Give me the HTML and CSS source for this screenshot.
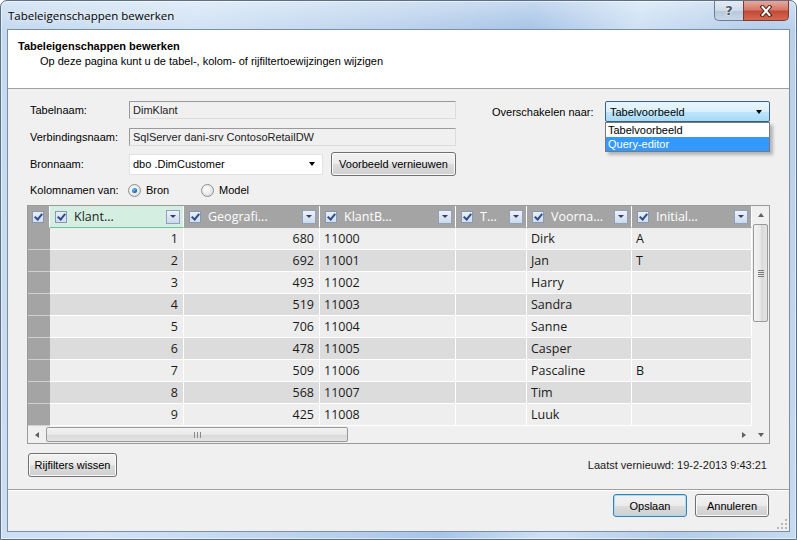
FILE: index.html
```html
<!DOCTYPE html>
<html>
<head>
    <title>Tabeleigenschappen bewerken</title>
    <link rel="stylesheet" href="styles.css">
</head>
<body>

<div class="window">
    <!-- Titelbalk -->
    <div class="titlebar">
        <span class="title">Tabeleigenschappen bewerken</span>
        <div class="caption-buttons">
            <div class="cap-btn cap-help">?</div>
            <div class="cap-btn cap-close">
                <svg width="14" height="12" viewBox="0 0 14 12">
                    <path d="M3.5 2 L10.5 10 M10.5 2 L3.5 10" stroke="#4a1d16" stroke-width="4" stroke-linecap="square"/>
                    <path d="M3.5 2 L10.5 10 M10.5 2 L3.5 10" stroke="#ffffff" stroke-width="2" stroke-linecap="square"/>
                </svg>
            </div>
        </div>
    </div>

    <div class="client">
        <div class="banner">
            <div class="banner-title">Tabeleigenschappen bewerken</div>
            <div class="banner-sub">Op deze pagina kunt u de tabel-, kolom- of rijfiltertoewijzingen wijzigen</div>
        </div>

        <div class="content">
            <div class="form-top">
                <div class="form-left">
                    <div class="form-row row-text first">
                        <span class="label">Tabelnaam:</span>
                        <div class="textbox readonly">DimKlant</div>
                    </div>
                    <div class="form-row row-text second">
                        <span class="label">Verbindingsnaam:</span>
                        <div class="textbox readonly">SqlServer dani-srv ContosoRetailDW</div>
                    </div>
                    <div class="form-row row-source">
                        <span class="label">Bronnaam:</span>
                        <div class="combo combo-source">
                            <span class="combo-text">dbo .DimCustomer</span>
                            <span class="arrow"></span>
                        </div>
                        <div class="btn btn-refresh">Voorbeeld vernieuwen</div>
                    </div>
                    <div class="form-row row-radio">
                        <span class="label">Kolomnamen van:</span>
                        <div class="radio-option option-bron">
                            <span class="radio checked"><span class="dot"></span></span>
                            <span>Bron</span>
                        </div>
                        <div class="radio-option">
                            <span class="radio"></span>
                            <span>Model</span>
                        </div>
                    </div>
                </div>

                <div class="form-right">
                    <span class="label label-switch">Overschakelen naar:</span>
                    <div class="switch-combo">
                        <div class="combo combo-open">
                            <span class="combo-text">Tabelvoorbeeld</span>
                            <span class="arrow"></span>
                        </div>
                        <ul class="dropdown-list">
                            <li>Tabelvoorbeeld</li>
                            <li class="selected">Query-editor</li>
                        </ul>
                    </div>
                </div>
            </div>

            <!-- Voorbeeldraster -->
            <div class="grid">
                <div class="grid-main">
                    <div class="grid-row grid-header">
                        <div class="hdr hdr-corner"><span class="chk"><span class="tick"></span></span></div>
                        <div class="hdr hdr-active">
                            <span class="chk"><span class="tick"></span></span>
                            <span class="hdr-text">Klant...</span>
                            <span class="hdr-drop"><span class="tri"></span></span>
                        </div>
                        <div class="hdr">
                            <span class="chk"><span class="tick"></span></span>
                            <span class="hdr-text">Geografi...</span>
                            <span class="hdr-drop"><span class="tri"></span></span>
                        </div>
                        <div class="hdr">
                            <span class="chk"><span class="tick"></span></span>
                            <span class="hdr-text">KlantB...</span>
                            <span class="hdr-drop"><span class="tri"></span></span>
                        </div>
                        <div class="hdr">
                            <span class="chk"><span class="tick"></span></span>
                            <span class="hdr-text">T...</span>
                            <span class="hdr-drop"><span class="tri"></span></span>
                        </div>
                        <div class="hdr">
                            <span class="chk"><span class="tick"></span></span>
                            <span class="hdr-text">Voorna...</span>
                            <span class="hdr-drop"><span class="tri"></span></span>
                        </div>
                        <div class="hdr">
                            <span class="chk"><span class="tick"></span></span>
                            <span class="hdr-text">Initial...</span>
                            <span class="hdr-drop"><span class="tri"></span></span>
                        </div>
                    </div>

                    <div class="grid-body">
                        <div class="grid-row">
                            <div class="rowhdr"></div><div class="cell num">1</div><div class="cell num">680</div><div class="cell">11000</div><div class="cell"></div><div class="cell">Dirk</div><div class="cell">A</div>
                        </div>
                        <div class="grid-row">
                            <div class="rowhdr"></div><div class="cell num">2</div><div class="cell num">692</div><div class="cell">11001</div><div class="cell"></div><div class="cell">Jan</div><div class="cell">T</div>
                        </div>
                        <div class="grid-row">
                            <div class="rowhdr"></div><div class="cell num">3</div><div class="cell num">493</div><div class="cell">11002</div><div class="cell"></div><div class="cell">Harry</div><div class="cell"></div>
                        </div>
                        <div class="grid-row">
                            <div class="rowhdr"></div><div class="cell num">4</div><div class="cell num">519</div><div class="cell">11003</div><div class="cell"></div><div class="cell">Sandra</div><div class="cell"></div>
                        </div>
                        <div class="grid-row">
                            <div class="rowhdr"></div><div class="cell num">5</div><div class="cell num">706</div><div class="cell">11004</div><div class="cell"></div><div class="cell">Sanne</div><div class="cell"></div>
                        </div>
                        <div class="grid-row">
                            <div class="rowhdr"></div><div class="cell num">6</div><div class="cell num">478</div><div class="cell">11005</div><div class="cell"></div><div class="cell">Casper</div><div class="cell"></div>
                        </div>
                        <div class="grid-row">
                            <div class="rowhdr"></div><div class="cell num">7</div><div class="cell num">509</div><div class="cell">11006</div><div class="cell"></div><div class="cell">Pascaline</div><div class="cell">B</div>
                        </div>
                        <div class="grid-row">
                            <div class="rowhdr"></div><div class="cell num">8</div><div class="cell num">568</div><div class="cell">11007</div><div class="cell"></div><div class="cell">Tim</div><div class="cell"></div>
                        </div>
                        <div class="grid-row">
                            <div class="rowhdr"></div><div class="cell num">9</div><div class="cell num">425</div><div class="cell">11008</div><div class="cell"></div><div class="cell">Luuk</div><div class="cell"></div>
                        </div>
                    </div>

                    <div class="hscroll">
                        <div class="sb-arrow"><span class="tri-left"></span></div>
                        <div class="hthumb"><span class="grip-v"></span><span class="grip-v"></span><span class="grip-v"></span></div>
                        <div class="sb-space"></div>
                        <div class="sb-arrow"><span class="tri-right"></span></div>
                    </div>
                </div>

                <div class="vscroll">
                    <div class="sb-arrow"><span class="tri-up"></span></div>
                    <div class="vthumb"><span class="grip-h"></span><span class="grip-h"></span><span class="grip-h"></span><span class="grip-h"></span></div>
                    <div class="sb-space"></div>
                    <div class="sb-arrow"><span class="tri-down"></span></div>
                </div>
            </div>

            <div class="under-grid">
                <div class="btn btn-clear">Rijfilters wissen</div>
                <span class="refreshed">Laatst vernieuwd: 19-2-2013 9:43:21</span>
            </div>
        </div>

        <div class="footer">
            <div class="btn btn-footer btn-default">Opslaan</div>
            <div class="btn btn-footer">Annuleren</div>
            <svg class="size-grip" width="10" height="10" viewBox="0 0 10 10">
                <rect x="8" y="0" width="2" height="2" fill="#b8b8b8"/>
                <rect x="4" y="4" width="2" height="2" fill="#b8b8b8"/>
                <rect x="8" y="4" width="2" height="2" fill="#b8b8b8"/>
                <rect x="0" y="8" width="2" height="2" fill="#b8b8b8"/>
                <rect x="4" y="8" width="2" height="2" fill="#b8b8b8"/>
                <rect x="8" y="8" width="2" height="2" fill="#b8b8b8"/>
            </svg>
        </div>
    </div>
</div>

</body>
</html>
```

FILE: styles.css
```css
body {
    margin: 0;
    padding: 0;
    font-family: "Liberation Sans", Arial, sans-serif;
    font-size: 11px;
    color: #000;
    background-color: #fff;
}

/* Vensterrand (Aero) */
.window {
    width: 797px;
    height: 540px;
    box-sizing: border-box;
    border: 1px solid #5d6f84;
    border-radius: 7px 7px 0 0;
    padding: 0 6px 7px 6px;
    display: flex;
    flex-direction: column;
    background:
        linear-gradient(to bottom, rgba(255, 255, 255, 0.35), rgba(255, 255, 255, 0) 28px),
        linear-gradient(100deg, #c4d9f0 0%, #d2e3f5 22%, #bcd3ed 45%, #a8c5e7 60%, #cfe1f4 72%, #b5cdea 86%, #c6daf0 100%);
    box-shadow: inset 0 0 0 1px rgba(255, 255, 255, 0.55);
}

.titlebar {
    height: 28px;
    display: flex;
    align-items: center;
    padding: 0 1px;
    flex-shrink: 0;
}

.title {
    font-family: "Open Sans", sans-serif;
    font-size: 11.5px;
    color: #000;
    text-shadow: 0 0 6px rgba(255, 255, 255, 0.9);
}

.caption-buttons {
    margin-left: auto;
    align-self: flex-start;
    display: flex;
}

.cap-btn {
    height: 20px;
    box-sizing: border-box;
    border: 1px solid #6b7d92;
    border-top: none;
    display: flex;
    align-items: center;
    justify-content: center;
}

.cap-help {
    width: 29px;
    border-right: none;
    border-radius: 0 0 0 5px;
    background: linear-gradient(to bottom, #e4ecf5 0%, #cfdbe9 50%, #b7c7da 51%, #c9d6e6 100%);
    font-family: "DejaVu Sans", sans-serif;
    font-weight: bold;
    font-size: 13px;
    color: #4b5866;
    text-shadow: 0 0 2px #fff, 0 0 2px #fff;
}

.cap-close {
    width: 46px;
    border-color: #7a3a34;
    border-radius: 0 0 5px 0;
    background: linear-gradient(to bottom, #e8a99c 0%, #d6796a 45%, #c24a38 55%, #d56a50 100%);
}

/* Clientgebied */
.client {
    flex: 1;
    display: flex;
    flex-direction: column;
    border: 1px solid #7a8ea6;
    background-color: #f0f0f0;
}

.banner {
    height: 58px;
    background-color: #fff;
    border-bottom: 1px solid #a0a0a0;
    padding: 10px 10px 0 10px;
    box-sizing: content-box;
    height: 48px;
}

.banner-title {
    font-weight: bold;
    line-height: 13px;
}

.banner-sub {
    line-height: 13px;
    margin-top: 2px;
    padding-left: 22px;
}

.content {
    height: 400px;
    box-sizing: border-box;
    padding-top: 12px;
    display: flex;
    flex-direction: column;
}

.form-top {
    display: flex;
    align-items: flex-start;
    padding-left: 22px;
    height: 96px;
}

.form-left {
    width: 426px;
    display: flex;
    flex-direction: column;
}

.form-row {
    display: flex;
    align-items: center;
}

.form-row .label {
    width: 99px;
    flex-shrink: 0;
}

.row-text {
    height: 18px;
}

.row-text.first {
    margin-bottom: 9px;
}

.row-text.second {
    margin-bottom: 6px;
}

.row-source {
    height: 24px;
    margin-bottom: 7px;
}

.row-radio {
    height: 14px;
}

.textbox {
    width: 327px;
    height: 18px;
    box-sizing: border-box;
    border: 1px solid;
    border-color: #9a9a9a #dcdcdc #dcdcdc #9a9a9a;
    padding-left: 3px;
    display: flex;
    align-items: center;
    color: #222;
}

.textbox.readonly {
    background-color: #f0f0f0;
}

.combo {
    height: 21px;
    box-sizing: border-box;
    display: flex;
    align-items: center;
    padding: 0 7px 0 3px;
}

.combo-text {
    flex: 1;
}

.arrow {
    width: 0;
    height: 0;
    border-left: 3.5px solid transparent;
    border-right: 3.5px solid transparent;
    border-top: 4px solid #000;
}

.combo-source {
    width: 194px;
    background-color: #fff;
    border: 1px solid #e2e2e2;
    margin-right: 8px;
}

.btn {
    box-sizing: border-box;
    border: 1px solid #707070;
    border-radius: 3px;
    background: linear-gradient(to bottom, #f2f2f2 0%, #ebebeb 50%, #dddddd 51%, #cfcfcf 100%);
    box-shadow: inset 0 0 0 1px #fbfbfb;
    display: flex;
    align-items: center;
    justify-content: center;
    color: #000;
}

.btn-refresh {
    width: 125px;
    height: 24px;
}

.radio-option {
    display: flex;
    align-items: center;
    gap: 5px;
}

.option-bron {
    width: 73px;
}

.row-radio .radio-option:first-of-type {
    margin-left: -1px;
}

.radio {
    width: 13px;
    height: 13px;
    box-sizing: border-box;
    border-radius: 50%;
    border: 1px solid #8e8f8f;
    background: radial-gradient(circle at 40% 40%, #ffffff 0%, #e6e6e6 60%, #d2d2d2 100%);
    display: flex;
    align-items: center;
    justify-content: center;
}

.radio .dot {
    width: 5px;
    height: 5px;
    border-radius: 50%;
    background: radial-gradient(circle at 35% 35%, #7cc3f4 0%, #1f6bb3 60%, #0f3f79 100%);
}

.form-right {
    margin-left: 36px;
    display: flex;
    align-items: center;
}

.label-switch {
    width: 113px;
}

.switch-combo {
    position: relative;
    width: 165px;
}

.combo-open {
    border: 1px solid #3c5f80;
    border-radius: 2px;
    background: linear-gradient(to bottom, #eaf6fd 0%, #d9f0fc 50%, #bee6fd 51%, #a7d9f5 100%);
    padding: 0 7px 0 4px;
}

/* Uitgeklapte lijst over de rest van het formulier */
.dropdown-list {
    position: absolute;
    top: 100%;
    left: 0;
    width: 165px;
    box-sizing: border-box;
    margin: 0;
    padding: 0;
    list-style-type: none;
    background-color: #fff;
    border: 1px solid #7a7a7a;
    box-shadow: 3px 3px 3px rgba(0, 0, 0, 0.25);
    z-index: 1;
}

.dropdown-list li {
    height: 14px;
    line-height: 14px;
    padding-left: 2px;
}

.dropdown-list li.selected {
    background-color: #3399ff;
    color: #fff;
}

/* Raster */
.grid {
    margin: 8px 19px 0 19px;
    border: 1px solid #9a9a9a;
    display: flex;
    height: 237px;
    background-color: #f0f0f0;
}

.grid-main {
    width: 724px;
    display: flex;
    flex-direction: column;
}

.grid-row {
    display: grid;
    grid-template-columns: 22px 134px 136px 136px 71px 105px 120px;
    height: 22px;
    font-family: "Open Sans", sans-serif;
    font-size: 12.5px;
}

.grid-header {
    background-color: #a4a4a4;
}

.hdr {
    box-sizing: border-box;
    border-right: 1px solid #fff;
    border-bottom: 1px solid #a4a4a4;
    display: flex;
    align-items: center;
    padding: 0 3px 0 5px;
    color: #fff;
}

.hdr-corner {
    padding-left: 4px;
}

.hdr-active {
    background-color: #d4efe1;
    border-bottom-color: #6cc596;
    color: #1e1e1e;
}

.chk {
    width: 12px;
    height: 12px;
    box-sizing: border-box;
    border: 1px solid #8798b4;
    background: linear-gradient(to bottom, #e9eef6, #d3dcea);
    display: flex;
    align-items: center;
    justify-content: center;
    flex-shrink: 0;
}

.tick {
    width: 3px;
    height: 6px;
    border: solid #2a4f8e;
    border-width: 0 2px 2px 0;
    transform: rotate(40deg);
    margin-top: -2px;
}

.hdr-text {
    flex: 1;
    margin-left: 7px;
    white-space: nowrap;
    overflow: hidden;
}

.hdr-drop {
    width: 14px;
    height: 14px;
    box-sizing: border-box;
    border: 1px solid #8ea2c0;
    background: linear-gradient(to bottom, #eef2f8, #cfd9e8);
    display: flex;
    align-items: center;
    justify-content: center;
    flex-shrink: 0;
}

.tri {
    width: 0;
    height: 0;
    border-left: 3.5px solid transparent;
    border-right: 3.5px solid transparent;
    border-top: 3.5px solid #27407a;
}

.grid-body .grid-row {
    background-color: #eeeeee;
}

.grid-body .grid-row:nth-child(even) {
    background-color: #dcdcdc;
}

.rowhdr {
    background-color: #a4a4a4;
    border-bottom: 1px solid #d0d0d0;
}

.cell {
    box-sizing: border-box;
    border-right: 1px solid #fff;
    border-bottom: 1px solid #fff;
    display: flex;
    align-items: center;
    padding: 0 4px;
    color: #1a1a1a;
    white-space: nowrap;
}

.cell.num {
    justify-content: flex-end;
    padding-right: 5px;
}

/* Schuifbalken */
.hscroll {
    height: 17px;
    display: flex;
    align-items: center;
}

.vscroll {
    width: 17px;
    display: flex;
    flex-direction: column;
    align-items: center;
}

.sb-arrow {
    width: 17px;
    height: 17px;
    display: flex;
    align-items: center;
    justify-content: center;
    flex-shrink: 0;
}

.sb-space {
    flex: 1;
}

.tri-left {
    border-top: 3.5px solid transparent;
    border-bottom: 3.5px solid transparent;
    border-right: 4px solid #606060;
}

.tri-right {
    border-top: 3.5px solid transparent;
    border-bottom: 3.5px solid transparent;
    border-left: 4px solid #606060;
}

.tri-up {
    border-left: 3.5px solid transparent;
    border-right: 3.5px solid transparent;
    border-bottom: 4px solid #606060;
}

.tri-down {
    border-left: 3.5px solid transparent;
    border-right: 3.5px solid transparent;
    border-top: 4px solid #606060;
}

.hthumb {
    width: 302px;
    height: 15px;
    margin-left: 1px;
    box-sizing: border-box;
    border: 1px solid #999;
    border-radius: 2px;
    background: linear-gradient(to bottom, #f3f3f3 0%, #e8e8e8 50%, #d8d8d8 51%, #e4e4e4 100%);
    display: flex;
    align-items: center;
    justify-content: center;
    gap: 2px;
}

.grip-v {
    width: 1px;
    height: 6px;
    background-color: #8a8a8a;
}

.vthumb {
    width: 15px;
    height: 98px;
    margin-top: 1px;
    box-sizing: border-box;
    border: 1px solid #999;
    border-radius: 2px;
    background: linear-gradient(to right, #f3f3f3 0%, #e8e8e8 50%, #d8d8d8 51%, #e4e4e4 100%);
    display: flex;
    flex-direction: column;
    align-items: center;
    justify-content: center;
    gap: 1px;
}

.grip-h {
    width: 6px;
    height: 1px;
    background-color: #7a7a7a;
}

.under-grid {
    margin-top: 9px;
    padding: 0 22px 0 20px;
    display: flex;
    align-items: center;
    justify-content: space-between;
}

.btn-clear {
    width: 89px;
    height: 24px;
}

.refreshed {
    color: #1a1a1a;
}

/* Knoppenbalk onderaan */
.footer {
    flex: 1;
    border-top: 1px solid #a0a0a0;
    box-shadow: inset 0 1px 0 #fff;
    display: flex;
    align-items: flex-start;
    justify-content: flex-end;
    gap: 8px;
    padding: 4px 20px 0 0;
    position: relative;
}

.btn-footer {
    width: 74px;
    height: 23px;
}

.btn-default {
    border-color: #3c7fb1;
    box-shadow: inset 0 0 0 1px #a6dcf6;
}

.size-grip {
    position: absolute;
    right: 2px;
    bottom: 2px;
}
```
